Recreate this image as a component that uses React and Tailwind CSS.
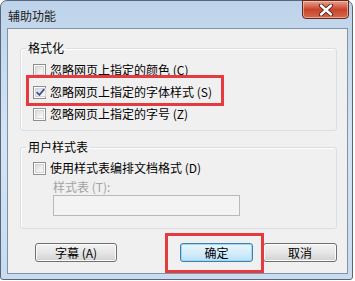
import React from "react";

function Check({ checked }) {
  return (
    <span className="w-[13px] h-[13px] shrink-0 border border-[#8e8f8f] bg-white p-[1px] flex">
      <span className="flex-1 border border-[#d2d4d6] bg-gradient-to-br from-[#dcdcdc] to-[#fbfbfb] flex items-center justify-center">
        {checked && (
          <svg width="9" height="9" viewBox="0 0 9 9">
            <path d="M1.2 4.6 L3.4 7 L7.8 1.6" fill="none" stroke="#3b4f8a" strokeWidth="1.7" strokeLinejoin="round" strokeLinecap="round" />
          </svg>
        )}
      </span>
    </span>
  );
}

function Row({ checked, children }) {
  return (
    <div className="h-[22px] flex items-center gap-[4px]">
      <Check checked={checked} />
      <span className="whitespace-nowrap">{children}</span>
    </div>
  );
}

function Btn({ children, className = "", focused }) {
  return (
    <div
      className={
        "h-[19px] rounded-[3px] border flex items-center justify-center " +
        (focused
          ? "border-[#3c7fb1] bg-gradient-to-b from-[#e9f5fc] via-[#d6eefb] to-[#b9e1f8] shadow-[inset_0_0_0_1px_#9fd8f6] "
          : "border-[#707070] bg-gradient-to-b from-[#f3f3f3] via-[#e6e6e6] to-[#d2d2d2] shadow-[inset_0_0_0_1px_#fbfbfb] ") +
        className
      }
    >
      <span className="whitespace-nowrap">{children}</span>
    </div>
  );
}

export default function App() {
  return (
    <div className="w-[355px] h-[281px] bg-white relative font-['Noto_Sans_CJK_SC','Noto_Sans',sans-serif] text-[12px] leading-[16px] text-black">
      <div className="w-[353px] h-[280px] rounded-t-[7px] rounded-b-[3px] border border-[#55677c] bg-gradient-to-b from-[#bed3ea] via-[#d5e4f4] to-[#c8dbef] flex flex-col pl-[6px] pr-[4px] pb-[5px]">
        <div className="h-[27px] flex items-start justify-between shrink-0">
          <span className="mt-[7px] ml-[1px] text-[#1b1b1b]">辅助功能</span>
          <div className="w-[47px] h-[19px] mt-[-1px] mr-[-1px] rounded-b-[4px] border border-[#5e2a22] bg-gradient-to-b from-[#e7a08e] via-[#c9432b] to-[#d6684a] shadow-[inset_0_0_0_1px_rgba(255,215,200,0.55)] flex items-center justify-center">
            <svg width="16" height="12" viewBox="0 0 16 12">
              <path d="M3 1.5 L13 10.5 M13 1.5 L3 10.5" stroke="#4a1d16" strokeWidth="4.2" strokeLinecap="round" />
              <path d="M3 1.5 L13 10.5 M13 1.5 L3 10.5" stroke="#ffffff" strokeWidth="2.4" strokeLinecap="round" />
            </svg>
          </div>
        </div>
        <div className="flex-1 border border-[#8193a8] bg-[#f0f0f0] flex flex-col">
          <fieldset className="mt-[11px] ml-[12px] w-[317px] border border-[#d5dfe5] rounded-[3px] pt-[3px] pb-[5px] shadow-[inset_1px_1px_0_#ffffff]">
            <legend className="ml-[5px] px-[2px]">格式化</legend>
            <div className="pl-[12px]">
              <Row>忽略网页上指定的颜色 (C)</Row>
              <Row checked>忽略网页上指定的字体样式 (S)</Row>
              <Row>忽略网页上指定的字号 (Z)</Row>
            </div>
          </fieldset>
          <fieldset className="mt-[8px] ml-[12px] w-[317px] border border-[#d5dfe5] rounded-[3px] pt-[2px] pb-[12px] shadow-[inset_1px_1px_0_#ffffff]">
            <legend className="ml-[5px] px-[2px]">用户样式表</legend>
            <div className="pl-[12px]">
              <Row>使用样式表编排文档格式 (D)</Row>
              <div className="pl-[20px]">
                <div className="h-[16px] text-[#a3a3a3]">样式表 (T):</div>
                <div className="w-[187px] h-[21px] border border-[#b5b8bd] bg-[#f3f3f3]" />
              </div>
            </div>
          </fieldset>
          <div className="mt-[14px] ml-[12px] w-[317px] flex items-start">
            <Btn className="ml-[15px] w-[82px]">字幕 (A)</Btn>
            <Btn focused className="ml-auto w-[73px]">确定</Btn>
            <Btn className="ml-[10px] w-[74px]">取消</Btn>
          </div>
        </div>
      </div>
      <div className="absolute left-[26px] top-[75px] w-[198px] h-[31px] border-[3px] border-[#e53a3f]" />
      <div className="absolute left-[165px] top-[233px] w-[99px] h-[40px] border-[3px] border-[#e53a3f]" />
    </div>
  );
}
